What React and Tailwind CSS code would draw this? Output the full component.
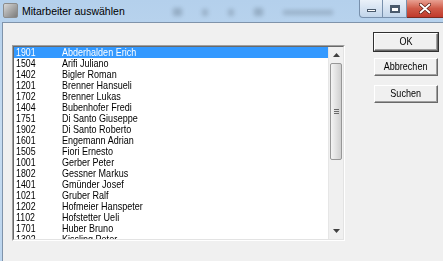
import React from 'react';

const rows = [
  ['1901', 'Abderhalden Erich'],
  ['1504', 'Arifi Juliano'],
  ['1402', 'Bigler Roman'],
  ['1201', 'Brenner Hansueli'],
  ['1702', 'Brenner Lukas'],
  ['1404', 'Bubenhofer Fredi'],
  ['1751', 'Di Santo Giuseppe'],
  ['1902', 'Di Santo Roberto'],
  ['1601', 'Engemann Adrian'],
  ['1505', 'Fiori Ernesto'],
  ['1001', 'Gerber Peter'],
  ['1802', 'Gessner Markus'],
  ['1401', 'Gmünder Josef'],
  ['1021', 'Gruber Ralf'],
  ['1202', 'Hofmeier Hanspeter'],
  ['1102', 'Hofstetter Ueli'],
  ['1701', 'Huber Bruno'],
  ['1302', 'Kissling Peter'],
];

const dlgFont = { fontFamily: '"Liberation Sans", Arial, sans-serif' };

// classic raised 3D button
function DlgButton({ label, isDefault }) {
  return (
    <div className={isDefault ? 'border border-[#303030]' : 'border border-transparent'}>
      <div className="border-t border-l border-white border-r border-b border-r-[#696969] border-b-[#696969] bg-[#f0f0f0]">
        <div className="h-[16px] flex items-center justify-center text-[11px] text-black border-r border-b border-r-[#a0a0a0] border-b-[#a0a0a0]" style={dlgFont}>
          <span className="inline-block scale-x-[0.82] whitespace-nowrap">{label}</span>
        </div>
      </div>
    </div>
  );
}

function Scrollbar() {
  return (
    <div className="w-[15px] flex flex-col bg-[#f0f0f0] border-l border-[#e6e6e6]">
      <div className="h-[16px] flex items-center justify-center">
        <svg width="7" height="4" viewBox="0 0 7 4"><path d="M3.5 0 L7 4 L0 4 Z" fill="#404040" /></svg>
      </div>
      <div className="h-[97px] mx-[1px] rounded-[2px] border border-[#979797] bg-gradient-to-r from-[#f4f4f4] via-[#e2e2e2] to-[#cfcfcf] flex items-center justify-center">
        <svg width="5" height="6" viewBox="0 0 5 6">
          <path d="M0 0.5 H5 M0 2.5 H5 M0 4.5 H5" stroke="#6a6a6a" strokeWidth="1" />
        </svg>
      </div>
      <div className="flex-1" />
      <div className="h-[16px] flex items-center justify-center">
        <svg width="7" height="4" viewBox="0 0 7 4"><path d="M0 0 L7 0 L3.5 4 Z" fill="#404040" /></svg>
      </div>
    </div>
  );
}

function TitleBar() {
  return (
    <div className="h-[22px] flex items-start relative">
      <div className="w-[15px] h-[15px] mt-[3px] ml-[3px] rounded-[2px] bg-gradient-to-br from-[#d8d8d8] via-[#a8a8a8] to-[#7c7c7c] border border-[#8c8c8c]" />
      <div className="ml-[4px] mt-[4px] text-[10.5px] leading-[14px] text-black whitespace-nowrap" style={dlgFont}>
        Mitarbeiter auswählen
      </div>
      <div className="flex items-center gap-[20px] ml-[48px] mt-[8px] opacity-30 blur-[2px]">
        <div className="w-[9px] h-[8px] bg-[#4a5a6a]" />
        <div className="w-[6px] h-[7px] bg-[#5a6a7a]" />
        <div className="w-[6px] h-[7px] bg-[#5a6a7a]" />
        <div className="w-[9px] h-[8px] bg-[#4a5a6a]" />
        <div className="w-[50px] h-[5px] bg-[#5a6a7a]" />
      </div>
      <div className="flex-1" />
      <div className="flex h-[18px]">
        <div className="w-[24px] rounded-bl-[4px] border border-t-0 border-[#7890ac] bg-gradient-to-b from-[#eaf1f9] to-[#c2d5ea] flex items-center justify-center">
          <div className="w-[9px] h-[3px] mt-[4px] bg-white border border-[#4a5a6c]" />
        </div>
        <div className="w-[24px] border-b border-r border-[#7890ac] bg-gradient-to-b from-[#eaf1f9] to-[#c2d5ea] flex items-center justify-center">
          <div className="w-[10px] h-[8px] border-2 border-t-[3px] border-[#4a5a6c] bg-white" />
        </div>
        <div className="w-[36px] border-b border-[#7a2a20] bg-gradient-to-b from-[#e8a092] via-[#cf5a48] to-[#c0392b] flex items-center justify-center">
          <svg width="12" height="11" viewBox="0 0 12 11">
            <path d="M1.5 1.5 L10.5 9.5 M10.5 1.5 L1.5 9.5" stroke="#5a1a10" strokeWidth="3.2" strokeLinecap="round" />
            <path d="M1.5 1.5 L10.5 9.5 M10.5 1.5 L1.5 9.5" stroke="#ffffff" strokeWidth="1.8" strokeLinecap="round" />
          </svg>
        </div>
      </div>
    </div>
  );
}

export default function App() {
  return (
    <div className="w-[443px] h-[261px] overflow-hidden flex flex-col bg-gradient-to-b from-[#b4d0ec] via-[#c6dcf1] to-[#bcd5ee]">
      <TitleBar />
      <div className="flex-1 ml-[2px] border-t border-l border-[#7f93aa] bg-[#f0f0f0] flex items-start pl-[9px]">
        {/* list box */}
        <div className="mt-[22px] w-[333px] h-[196px] border border-t-[#a0a0a0] border-l-[#a0a0a0] border-b-[#ffffff] border-r-[#ffffff]">
          <div className="h-full border border-t-[#696969] border-l-[#696969] border-b-[#e3e3e3] border-r-[#e3e3e3] bg-white flex">
            <div className="flex-1 overflow-hidden" style={dlgFont}>
              {rows.map(([nr, name], i) => (
                <div
                  key={nr}
                  className={`h-[11px] flex items-center text-[11px] leading-[11px] whitespace-nowrap ${i === 0 ? 'bg-[#3399ff] text-white' : 'text-black'}`}
                >
                  <span className="w-[48px] pl-[2px] shrink-0">
                    <span className="inline-block origin-left scale-x-[0.8]">{nr}</span>
                  </span>
                  <span className="inline-block origin-left scale-x-[0.82]">{name}</span>
                </div>
              ))}
            </div>
            <Scrollbar />
          </div>
        </div>
        {/* buttons */}
        <div className="ml-[28px] mt-[9px] w-[66px] flex flex-col">
          <DlgButton label="OK" isDefault />
          <div className="h-[5px]" />
          <DlgButton label="Abbrechen" />
          <div className="h-[7px]" />
          <DlgButton label="Suchen" />
        </div>
      </div>
    </div>
  );
}
